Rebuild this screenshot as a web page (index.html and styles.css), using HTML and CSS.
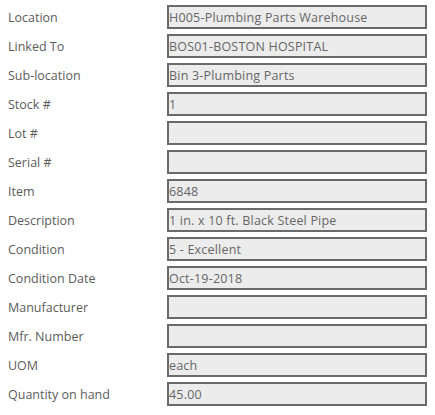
FILE: index.html
```html
<!DOCTYPE html>
<html>
<head>
<meta charset="utf-8">
<link rel="stylesheet" href="styles.css">
</head>
<body>
<div class="form">
  <div class="label"><span>Location</span></div><div class="field">H005-Plumbing Parts Warehouse</div>
  <div class="label"><span>Linked To</span></div><div class="field">BOS01-BOSTON HOSPITAL</div>
  <div class="label"><span>Sub-location</span></div><div class="field">Bin 3-Plumbing Parts</div>
  <div class="label"><span>Stock #</span></div><div class="field">1</div>
  <div class="label"><span>Lot #</span></div><div class="field"></div>
  <div class="label"><span>Serial #</span></div><div class="field"></div>
  <div class="label"><span>Item</span></div><div class="field">6848</div>
  <div class="label"><span>Description</span></div><div class="field">1 in. x 10 ft. Black Steel Pipe</div>
  <div class="label"><span>Condition</span></div><div class="field">5 - Excellent</div>
  <div class="label"><span>Condition Date</span></div><div class="field">Oct-19-2018</div>
  <div class="label"><span>Manufacturer</span></div><div class="field"></div>
  <div class="label"><span>Mfr. Number</span></div><div class="field"></div>
  <div class="label"><span>UOM</span></div><div class="field">each</div>
  <div class="label"><span>Quantity on hand</span></div><div class="field">45.00</div>
</div>
</body>
</html>
```
FILE: styles.css
```css
html, body {
  margin: 0;
  padding: 0;
  background: #ffffff;
}
body {
  font-family: "Open Sans", "Noto Sans", sans-serif;
  font-size: 12.5px;
}
.form {
  display: grid;
  grid-template-columns: 159px 260px;
  grid-auto-rows: 24px;
  row-gap: 5px;
  padding: 5px 0 0 8px;
}
.label {
  display: flex;
  align-items: center;
  color: #5c5c5c;
  white-space: nowrap;
  overflow: hidden;
}
.field {
  box-sizing: border-box;
  border: 2px solid #6a6a6a;
  background: #ececec;
  color: #666666;
  display: flex;
  align-items: center;
  padding-left: 0;
  white-space: nowrap;
  overflow: hidden;
  letter-spacing: 0.2px;
}
```
